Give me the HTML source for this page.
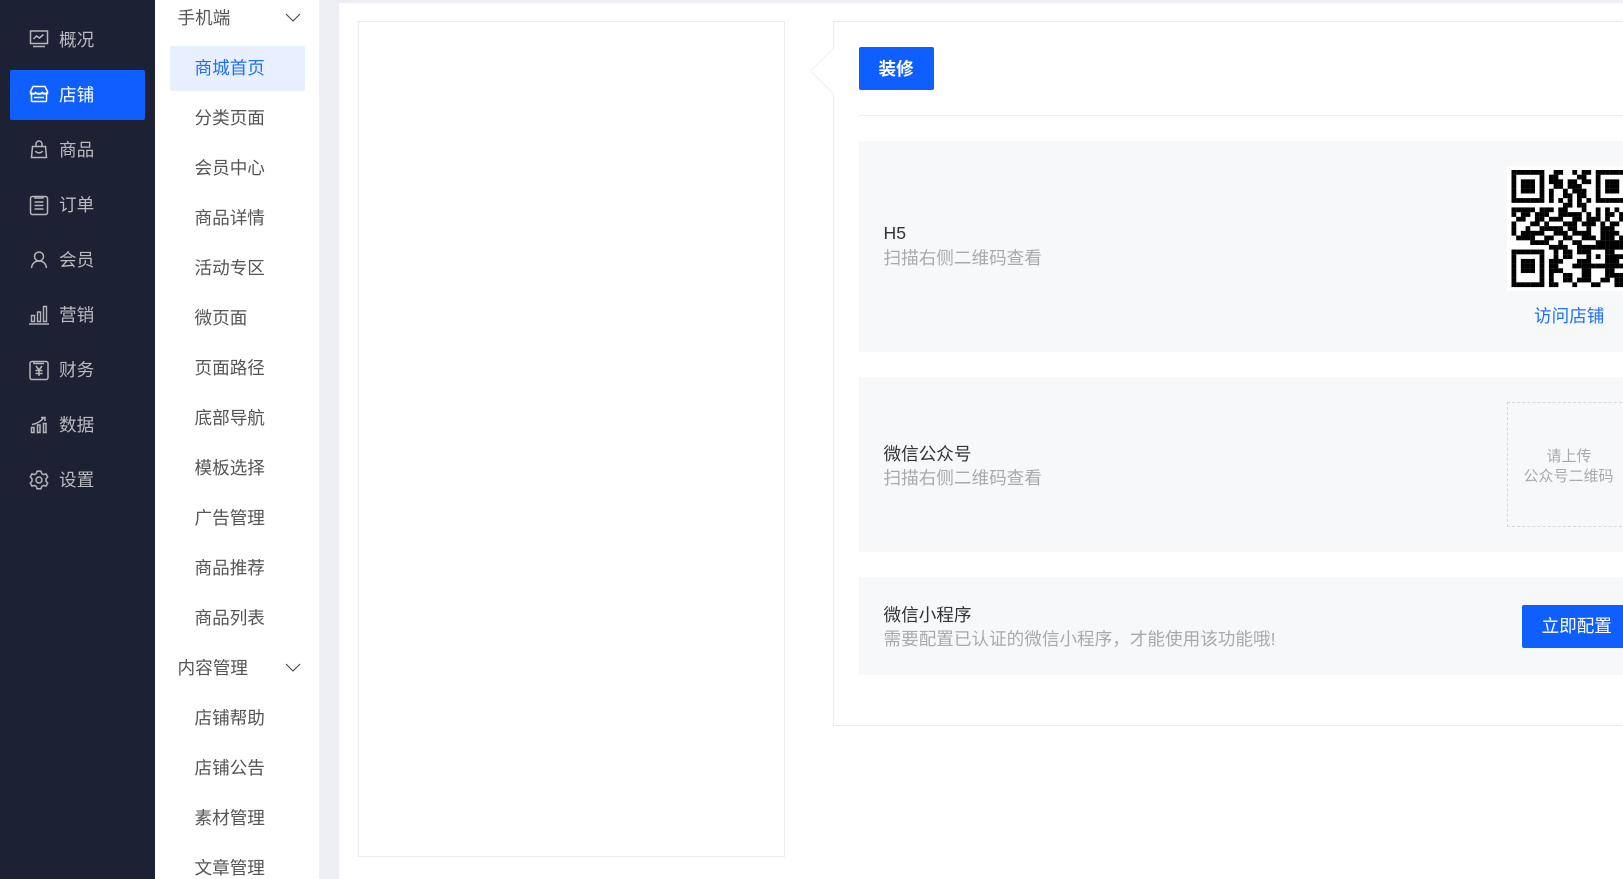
<!DOCTYPE html>
<html lang="zh"><head><meta charset="utf-8"><title>店铺</title>
<style>
html,body{margin:0;padding:0;width:1623px;height:879px;overflow:hidden;background:#fff}
body{position:relative;font-family:"Liberation Sans","Noto Sans CJK SC",sans-serif;font-size:17.6px}
div{position:absolute;box-sizing:border-box}
.t{white-space:nowrap;line-height:24px;height:24px}
.m{left:59px;color:#b9bbc0}
.s{left:194.500px;color:#555}
.h{left:177.500px;color:#555}
.ttl{left:883.500px;color:#333}
.sub{left:883.500px;color:#aaa}
svg{position:absolute;overflow:visible}
.i{left:29px;width:20px;height:20px;fill:none;stroke:#b4b6bb;stroke-width:1.5}
</style></head><body>
<div style="left:0;top:0;width:155px;height:879px;background:#1c2134"></div>
<div style="left:10px;top:70px;width:135px;height:50px;background:#0f5eff;border-radius:2px"></div>
<div style="left:155px;top:0;width:164px;height:879px;background:#fff"></div>
<div style="left:319px;top:0;width:20px;height:879px;background:#eeeff4"></div>
<div style="left:339px;top:0;width:1284px;height:3px;background:#eeeff4"></div>

<svg class="i" style="top:29px" viewBox="0 0 20 20"><rect x="1.5" y="2" width="17" height="12.5"/><path d="M4.5 10l3-3 3 2 4-3.5M4 17.5h12"/></svg>
<svg class="i" style="top:84px;stroke:#fff" viewBox="0 0 20 20"><path d="M4 2.500h12l2.500 5v2H1.500v-2zM1.500 8c2 2.500 3.500 2.500 5 .5 1.500 2 5.500 2 7 0 1.500 2 3 2 5-.5M2.500 10v6.500a1 1 0 0 0 1 1h13a1 1 0 0 0 1-1V10M5 13.500h10"/></svg>
<svg class="i" style="top:140px" viewBox="0 0 20 20"><path d="M3.500 6.500h13l1 11h-15zM7 6.500V4a3 3 0 0 1 6 0v2.500M6.500 11c1.500 2.500 5.500 2.500 7 0"/></svg>
<svg class="i" style="top:195px" viewBox="0 0 20 20"><rect x="1.500" y="1.500" width="17" height="18" rx="2"/><path d="M6 1v2h8V1M5.500 7h9M5.500 10.500h9M5.500 14h9"/></svg>
<svg class="i" style="top:250px" viewBox="0 0 20 20"><circle cx="10" cy="6.500" r="4.500"/><path d="M2.500 18c.5-4.500 3.500-7 7.500-7s7 2.500 7.500 7"/></svg>
<svg class="i" style="top:305px" viewBox="0 0 20 20"><path d="M0 19h20M2.500 10.500h3v6h-3zM8.500 7h3v9.500h-3zM14.500 1.500h3v15h-3z" stroke-width="1.400"/></svg>
<svg class="i" style="top:360px" viewBox="0 0 20 20"><rect x="1" y="1.500" width="18" height="18" rx="2"/><path d="M5 1.500V3.500h10M7 6l3 4 3-4M10 10v6M6.500 10.500h7M6.500 13.500h7"/></svg>
<svg class="i" style="top:415px" viewBox="0 0 20 20"><path d="M2.500 12.500h2.500v5H2.500zM8.500 10h2.500v7.500H8.500zM14.500 8.500h2.500v9h-2.500zM3 9.500c4-.5 8-2.500 11.500-6.500M12 2.500h4v3.500"/></svg>
<svg class="i" style="top:470px" viewBox="0 0 20 20"><path d="M10 1l2 .3.8 2.300 1.800 1 2.400-.7 1.700 3-1.700 1.900v2.400l1.700 1.900-1.700 3-2.400-.7-1.800 1-.8 2.300h-4l-.8-2.300-1.800-1-2.400.7-1.700-3L3 11.200V8.800L1.300 6.900l1.700-3 2.400.7 1.800-1L8 1.300z"/><circle cx="10" cy="10" r="3"/></svg>

<div class="t m" style="top:28px">概况</div>
<div class="t m" style="top:83px;color:#fff">店铺</div>
<div class="t m" style="top:138px">商品</div>
<div class="t m" style="top:193px">订单</div>
<div class="t m" style="top:248px">会员</div>
<div class="t m" style="top:303px">营销</div>
<div class="t m" style="top:358px">财务</div>
<div class="t m" style="top:413px">数据</div>
<div class="t m" style="top:468px">设置</div>

<div style="left:170px;top:46px;width:135px;height:45px;background:#e8f0ff;border-radius:2px"></div>
<div class="t h" style="top:6px">手机端</div>
<svg style="left:285px;top:13px" width="16" height="9" viewBox="0 0 16 9" fill="none" stroke="#444" stroke-width="1.100"><path d="M1 1l7 7 7-7"/></svg>
<div class="t s" style="top:56px;color:#1e6fff">商城首页</div>
<div class="t s" style="top:106px">分类页面</div>
<div class="t s" style="top:156px">会员中心</div>
<div class="t s" style="top:206px">商品详情</div>
<div class="t s" style="top:256px">活动专区</div>
<div class="t s" style="top:306px">微页面</div>
<div class="t s" style="top:356px">页面路径</div>
<div class="t s" style="top:406px">底部导航</div>
<div class="t s" style="top:456px">模板选择</div>
<div class="t s" style="top:506px">广告管理</div>
<div class="t s" style="top:556px">商品推荐</div>
<div class="t s" style="top:606px">商品列表</div>
<div class="t h" style="top:656px">内容管理</div>
<svg style="left:285px;top:663px" width="16" height="9" viewBox="0 0 16 9" fill="none" stroke="#444" stroke-width="1.100"><path d="M1 1l7 7 7-7"/></svg>
<div class="t s" style="top:706px">店铺帮助</div>
<div class="t s" style="top:756px">店铺公告</div>
<div class="t s" style="top:806px">素材管理</div>
<div class="t s" style="top:856px">文章管理</div>

<div style="left:358px;top:21px;width:427px;height:836px;border:1px solid #ececec"></div>
<div style="left:833px;top:21px;width:800px;height:705px;border:1px solid #ececec"></div>
<svg style="left:809px;top:47px" width="26" height="48" viewBox="0 0 26 48"><path d="M25 1L1.500 24 25 47z" fill="#fff"/><path d="M24.500 1L1.500 24l23 23" fill="none" stroke="#efefef"/></svg>

<div style="left:859px;top:47px;width:75px;height:43px;background:#0f5eff;border-radius:2px"></div>
<div class="t" style="left:878.500px;top:57px;color:#fff;font-weight:bold">装修</div>
<div style="left:859px;top:115px;width:764px;height:1px;background:#ececec"></div>

<div style="left:859px;top:141px;width:764px;height:211px;background:#f7f8fa"></div>
<div class="t ttl" style="top:221px">H5</div>
<div class="t sub" style="top:246px">扫描右侧二维码查看</div>
<svg id="qr" style="left:1507px;top:166px;background:#fff" width="125" height="125" viewBox="0 0 125 125"></svg>
<div class="t" style="left:1534px;top:304px;color:#1e6fff">访问店铺</div>

<div style="left:859px;top:377px;width:764px;height:175px;background:#f7f8fa"></div>
<div class="t ttl" style="top:442px">微信公众号</div>
<div class="t sub" style="top:466px">扫描右侧二维码查看</div>
<div style="left:1507px;top:402px;width:130px;height:125px;border:1px dashed #d8d8d8"></div>
<div class="t" style="left:1546.500px;top:445px;color:#aaa;font-size:15px">请上传</div>
<div class="t" style="left:1523.500px;top:465px;color:#aaa;font-size:15px">公众号二维码</div>

<div style="left:859px;top:577px;width:764px;height:98px;background:#f7f8fa"></div>
<div class="t ttl" style="top:603px">微信小程序</div>
<div class="t sub" style="top:627px">需要配置已认证的微信小程序，才能使用该功能哦!</div>
<div style="left:1522px;top:605px;width:101px;height:43px;background:#0f5eff;border-radius:2px 0 0 2px"></div>
<div class="t" style="left:1541.500px;top:614px;color:#fff">立即配置</div>

<script>
var r=["1111111001100101100111111","1000001011000011000100000","1011101011101101100101110","1011101001101110000101110","1011101010010111000101110","1000001010011011000100000","1111111010101010101111111","0000000000011011000000000","1111101110110001001010101","1011011100111110101011011","0110011011100110111010010","1000110100011101110101101","1001001111101100100111001","1011111001110111100111100","0111100110011001110111011","0000111100100110001111110","0000000011110011111111111","1111111001011011100011001","1000001001011000101011111","1011101011100011100011101","1011101011000111111111110","1011101011100001100011001","1000001010011001100011111","1000001010011011100110110","1111111011000100011000111"];
var s="",m=4.68;
for(var y=0;y<25;y++)for(var x=0;x<25;x++){
 var v=r[y][x];
 if(x>=18&&y<7){var a=x-18;v=(y==0||y==6||a==0||a==6||(a>=2&&a<=4&&y>=2&&y<=4))?"1":"0";}
 if(v=="1")s+='<rect x="'+(4.5+x*m).toFixed(2)+'" y="'+(4+y*m).toFixed(2)+'" width="'+(m+.1)+'" height="'+(m+.1)+'"/>';
}
document.getElementById("qr").innerHTML=s;
</script>
</body></html>
